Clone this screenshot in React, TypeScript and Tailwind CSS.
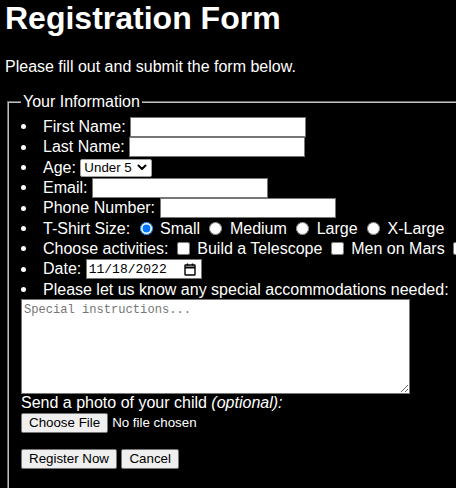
import React from "react";

function Bullet() {
  return (
    <span className="w-[22px] shrink-0 flex items-center">
      <span className="block w-[5px] h-[5px] rounded-full bg-white"></span>
    </span>
  );
}

function TextBox() {
  return (
    <input
      type="text"
      className="ml-[4.45px] w-[176px] h-[20px] bg-white border border-[#767676] text-black text-[13.33px] px-[2px] outline-none"
    />
  );
}

function CalendarIcon() {
  return (
    <svg width="12" height="13" viewBox="0 0 12 13" fill="none" stroke="#000" strokeWidth="1.4">
      <rect x="1" y="2" width="10" height="10" rx="0.5" />
      <line x1="1" y1="4.5" x2="11" y2="4.5" strokeWidth="2" />
      <line x1="3.5" y1="0.5" x2="3.5" y2="2.5" />
      <line x1="8.5" y1="0.5" x2="8.5" y2="2.5" />
    </svg>
  );
}

function Chevron() {
  return (
    <svg width="10" height="7" viewBox="0 0 10 7" fill="none" stroke="#000" strokeWidth="2" strokeLinecap="round" strokeLinejoin="round">
      <polyline points="1.5,1.5 5,5 8.5,1.5" />
    </svg>
  );
}

const row = "h-[20.35px] flex items-center whitespace-nowrap";
const btn =
  "h-[20px] bg-[#efefef] border border-[#767676] rounded-[2px] text-black text-[13.33px] leading-none px-[7px] flex items-center";

export default function App() {
  return (
    <div
      className="w-[456px] h-[488px] overflow-hidden bg-black text-white text-[16px] leading-[normal]"
      style={{ fontFamily: '"Liberation Sans", Arial, sans-serif' }}
    >
      <div className="w-[760px] pl-[5px]">
        <h1 className="m-0 mb-[21.44px] text-[32px] font-bold leading-[36.8px]">Registration Form</h1>
        <p className="m-0 mb-[16px] leading-[18.4px]">Please fill out and submit the form below.</p>
        <fieldset className="ml-[2px] border-2 [border-style:groove] border-[#c0c0c0] pt-[5.6px] px-[12px] pb-[10px]">
          <legend className="px-[2px] leading-[18.4px]">Your Information</legend>
          <div className="flex flex-col">
            <div className={row}>
              <Bullet />
              <span>First Name:</span>
              <TextBox />
            </div>
            <div className={row}>
              <Bullet />
              <span>Last Name:</span>
              <TextBox />
            </div>
            <div className={row}>
              <Bullet />
              <span>Age:</span>
              <div className="ml-[4.45px] w-[72px] h-[18px] bg-white border border-[#a0a0a0] rounded-[2px] text-black text-[13.33px] flex items-center justify-between pl-[3px] pr-[4px]">
                <span>Under 5</span>
                <Chevron />
              </div>
            </div>
            <div className={row}>
              <Bullet />
              <span>Email:</span>
              <TextBox />
            </div>
            <div className={row}>
              <Bullet />
              <span>Phone Number:</span>
              <TextBox />
            </div>
            <div className={row}>
              <Bullet />
              <span>T-Shirt Size:</span>
              <span className="w-[4.45px]"></span>
              <input type="radio" name="size" defaultChecked className="m-0 ml-[5px] mr-[3px] w-[13px] h-[13px] accent-[#0075ff]" />
              <span className="ml-[4.45px]">Small</span>
              <span className="w-[4.45px]"></span>
              <input type="radio" name="size" className="m-0 ml-[5px] mr-[3px] w-[13px] h-[13px]" />
              <span className="ml-[4.45px]">Medium</span>
              <span className="w-[4.45px]"></span>
              <input type="radio" name="size" className="m-0 ml-[5px] mr-[3px] w-[13px] h-[13px]" />
              <span className="ml-[4.45px]">Large</span>
              <span className="w-[4.45px]"></span>
              <input type="radio" name="size" className="m-0 ml-[5px] mr-[3px] w-[13px] h-[13px]" />
              <span className="ml-[4.45px]">X-Large</span>
            </div>
            <div className={row}>
              <Bullet />
              <span>Choose activities:</span>
              <span className="w-[4.45px]"></span>
              <input type="checkbox" className="m-0 ml-[4px] mr-[3px] w-[13px] h-[13px]" />
              <span className="ml-[4.45px]">Build a Telescope</span>
              <span className="w-[4.45px]"></span>
              <input type="checkbox" className="m-0 ml-[4px] mr-[3px] w-[13px] h-[13px]" />
              <span className="ml-[4.45px]">Men on Mars</span>
              <span className="w-[4.45px]"></span>
              <input type="checkbox" className="m-0 ml-[4px] mr-[3px] w-[13px] h-[13px]" />
              <span className="ml-[4.45px]">Robotics Lab</span>
            </div>
            <div className={row}>
              <Bullet />
              <span>Date:</span>
              <div className="ml-[4.45px] w-[116px] h-[20px] bg-white border border-[#767676] text-black flex items-center justify-between pl-[2px] pr-[5px]">
                <span className="text-[13px]" style={{ fontFamily: '"Liberation Mono", "DejaVu Sans Mono", monospace' }}>
                  11/18/2022
                </span>
                <CalendarIcon />
              </div>
            </div>
            <div className={row}>
              <Bullet />
              <span>Please let us know any special accommodations needed:</span>
            </div>
          </div>
          <textarea
            placeholder="Special instructions..."
            className="block -mt-[1px] w-[389px] h-[95px] bg-white border border-[#767676] text-black text-[12.1px] leading-[15px] px-[2px] py-[3px] placeholder:text-[#757575] outline-none"
            style={{ fontFamily: '"Liberation Mono", "DejaVu Sans Mono", monospace' }}
          ></textarea>
          <div className="leading-[18.4px] whitespace-nowrap">
            Send a photo of your child <i>(optional):</i>
          </div>
          <div className="h-[21px] flex items-center whitespace-nowrap">
            <button className={btn}>Choose File</button>
            <span className="ml-[4px] text-[13.33px]">No file chosen</span>
          </div>
          <div className="mt-[16px] flex items-center gap-[4.45px]">
            <button className={btn}>Register Now</button>
            <button className={btn}>Cancel</button>
          </div>
          <div className="h-[40px]"></div>
        </fieldset>
      </div>
    </div>
  );
}
